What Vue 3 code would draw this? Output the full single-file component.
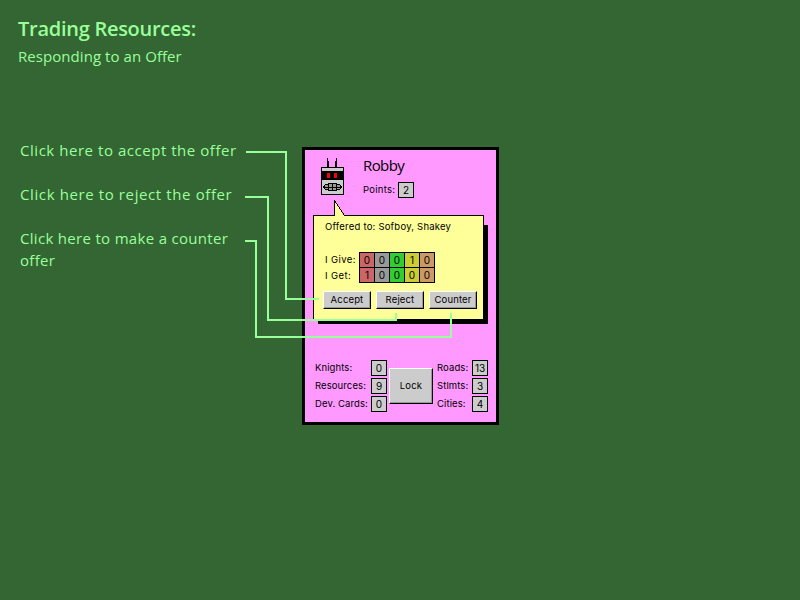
<script setup>
const notes = [
  { id: 'accept', text: 'Click here to accept the offer' },
  { id: 'reject', text: 'Click here to reject the offer' },
  { id: 'counter', text: 'Click here to make a counter offer' },
]
const trades = [
  { label: 'I Give:', amounts: [0, 0, 0, 1, 0] },
  { label: 'I Get:', amounts: [1, 0, 0, 0, 0] },
]
const kinds = ['brick', 'ore', 'wood', 'grain', 'clay']
const actions = ['Accept', 'Reject', 'Counter']
const leftStats = [
  { label: 'Knights:', value: 0 },
  { label: 'Resources:', value: 9 },
  { label: 'Dev. Cards:', value: 0 },
]
const rightStats = [
  { label: 'Roads:', value: 13 },
  { label: 'Stlmts:', value: 3 },
  { label: 'Cities:', value: 4 },
]
</script>

<template>
  <main class="page">
    <aside class="guide">
      <h1>Trading Resources:</h1>
      <h2>Responding to an Offer</h2>
      <div class="notes">
        <p v-for="n in notes" :key="n.id" :class="n.id">{{ n.text }}</p>
      </div>
    </aside>

    <section class="panel">
      <header class="player">
        <svg class="robot" width="23" height="37" viewBox="0 0 23 37" shape-rendering="crispEdges">
          <path d="M6 0h1v3h1v6h-2zM15 0h1v9h-2v-6h1z" fill="#000" />
          <rect x="0" y="9" width="23" height="28" fill="#000" />
          <rect x="1" y="10" width="21" height="3" fill="#ccc" />
          <rect x="1" y="22" width="21" height="14" fill="#ccc" />
          <path d="M6 15h3v5h-3zM13 15h3v5h-3z" fill="#f00" />
          <path d="M7 25h9v1h3v1h1v1h1v2h-1v1h-1v1h-3v1h-9v-1h-3v-1h-1v-1h-1v-2h1v-1h1v-1h3z" fill="#000" />
          <path d="M8 26h3v3h-3zM12 26h3v3h-3zM4 27h3v2h-3zM16 27h3v2h-3zM8 30h3v2h-3zM12 30h3v2h-3zM4 30h3v1h-3zM16 30h3v1h-3z" fill="#999" />
        </svg>
        <div class="identity">
          <div class="name">Robby</div>
          <div class="points"><span>Points:</span><b class="value">2</b></div>
        </div>
      </header>

      <div class="bubble">
        <svg class="tail" width="12" height="16" viewBox="0 0 12 16" shape-rendering="crispEdges">
          <path d="M1 1L10 16H1z" fill="#ff9" />
          <path d="M.5 0V15.5M.5 .5L10.5 15.5" fill="none" stroke="#000" />
        </svg>
        <div class="recipients">Offered to: Sofboy, Shakey</div>
        <div class="trade">
          <div class="trade-labels">
            <span v-for="t in trades" :key="t.label">{{ t.label }}</span>
          </div>
          <div class="trade-grid">
            <template v-for="t in trades" :key="t.label">
              <span v-for="(a, i) in t.amounts" :key="i" :class="kinds[i]">{{ a }}</span>
            </template>
          </div>
        </div>
        <div class="actions">
          <button v-for="a in actions" :key="a">{{ a }}</button>
        </div>
      </div>

      <footer class="stats">
        <div class="stat-column left">
          <div v-for="s in leftStats" :key="s.label" class="stat"><span>{{ s.label }}</span><b class="value">{{ s.value }}</b></div>
        </div>
        <button class="lock">Lock</button>
        <div class="stat-column right">
          <div v-for="s in rightStats" :key="s.label" class="stat"><span>{{ s.label }}</span><b class="value">{{ s.value }}</b></div>
        </div>
      </footer>
    </section>

    <svg class="connectors" width="800" height="600" viewBox="0 0 800 600" shape-rendering="crispEdges">
      <g fill="none" stroke="#9f9" stroke-width="2">
        <path d="M246 152H286V299H319" />
        <path d="M245 197H268V320H396V313" />
        <path d="M245 241H256V337H451V313" />
      </g>
    </svg>
  </main>
</template>

<style>
body {
  background: #363;
}
</style>

<style scoped>
.page {
  position: relative;
  box-sizing: border-box;
  width: 800px;
  height: 600px;
  display: flex;
  align-items: flex-start;
  background: #363;
  overflow: hidden;
}
.guide {
  width: 302px;
  flex: none;
  box-sizing: border-box;
  padding: 16px 0 0 18px;
  color: #9f9;
  font-family: "Open Sans", sans-serif;
}
h1 {
  margin: 0;
  font-size: 20px;
  line-height: 26px;
  font-weight: 600;
  letter-spacing: -0.27px;
}
h2 {
  margin: 3px 0 0;
  font-size: 15px;
  line-height: 22px;
  font-weight: 400;
  letter-spacing: 0.06px;
}
.notes {
  display: flex;
  flex-direction: column;
  gap: 22px;
  margin-top: 72px;
  padding-left: 2px;
  width: 226px;
}
.notes p {
  margin: 0;
  font-size: 15px;
  line-height: 22px;
  font-weight: 400;
  letter-spacing: 0.54px;
}
.notes .reject {
  letter-spacing: 0.61px;
}
.notes .counter {
  letter-spacing: 0.31px;
}
.panel {
  box-sizing: border-box;
  flex: none;
  width: 197px;
  height: 278px;
  margin-top: 147px;
  border: 3px solid #000;
  background: #f9f;
  font-family: Inter, sans-serif;
  font-size: 9.5px;
  letter-spacing: 0.1px;
  color: #000;
}
.player {
  display: flex;
  height: 65px;
  box-sizing: border-box;
  padding: 8px 0 0 16px;
}
.identity {
  margin-left: 19px;
}
.name {
  font-family: "Open Sans", sans-serif;
  font-weight: 400;
  font-size: 15px;
  line-height: 15px;
  letter-spacing: -0.6px;
}
.points {
  display: flex;
  margin-top: 9px;
  line-height: 16px;
  letter-spacing: 0.25px;
}
.points span {
  width: 35px;
}
.value {
  box-sizing: border-box;
  flex: none;
  width: 16px;
  height: 16px;
  border: 1px solid #000;
  background: #ccc;
  line-height: 15px;
  text-align: center;
  font-weight: 400;
  font-size: 10px;
  letter-spacing: 0;
}
.bubble {
  position: relative;
  box-sizing: border-box;
  width: 171px;
  height: 105px;
  margin-left: 8px;
  padding: 4px 0 0 9px;
  border: 1px solid #000;
  background: #ff9;
}
.bubble::before {
  content: "";
  position: absolute;
  left: 170px;
  top: 9px;
  width: 4px;
  height: 99px;
  background: #000;
}
.bubble::after {
  content: "";
  position: absolute;
  left: 4px;
  top: 104px;
  width: 170px;
  height: 4px;
  background: #000;
}
.tail {
  position: absolute;
  left: 20px;
  top: -16px;
}
.recipients {
  margin-left: 2px;
  line-height: 14px;
  letter-spacing: 0.22px;
}
.trade {
  display: flex;
  margin: 18px 0 0 2px;
}
.trade-labels {
  width: 34px;
  display: flex;
  flex-direction: column;
  line-height: 16px;
  letter-spacing: 0.4px;
}
.trade-grid {
  display: grid;
  align-self: flex-start;
  grid-template-columns: repeat(5, 14px);
  grid-auto-rows: 14px;
  gap: 1px;
  padding: 1px;
  background: #000;
}
.trade-grid span {
  line-height: 15px;
  text-align: center;
  font-size: 10px;
  letter-spacing: 0;
}
.brick { background: #c66; }
.ore { background: #999; }
.wood { background: #3c3; }
.grain { background: #cc3; }
.clay { background: #c96; }
.actions {
  display: flex;
  gap: 5px;
  margin-top: 7px;
}
button {
  box-sizing: border-box;
  flex: none;
  width: 48px;
  height: 18px;
  padding: 0 0 1px;
  border: 1px solid;
  border-color: #fff #000 #000 #fff;
  border-radius: 0;
  box-shadow: inset -1px -1px #999;
  background: #ccc;
  color: #000;
  font: inherit;
  letter-spacing: 0.15px;
}
.stats {
  display: flex;
  margin: 40px 0 0 10px;
}
.stat {
  display: flex;
  height: 18px;
  line-height: 16px;
  white-space: nowrap;
}
.left .stat span {
  width: 56px;
}
.right .stat span {
  width: 35px;
}
.lock {
  width: 44px;
  height: 36px;
  margin: 8px 4px 0 2px;
}
.connectors {
  position: absolute;
  left: 0;
  top: 0;
}
</style>
